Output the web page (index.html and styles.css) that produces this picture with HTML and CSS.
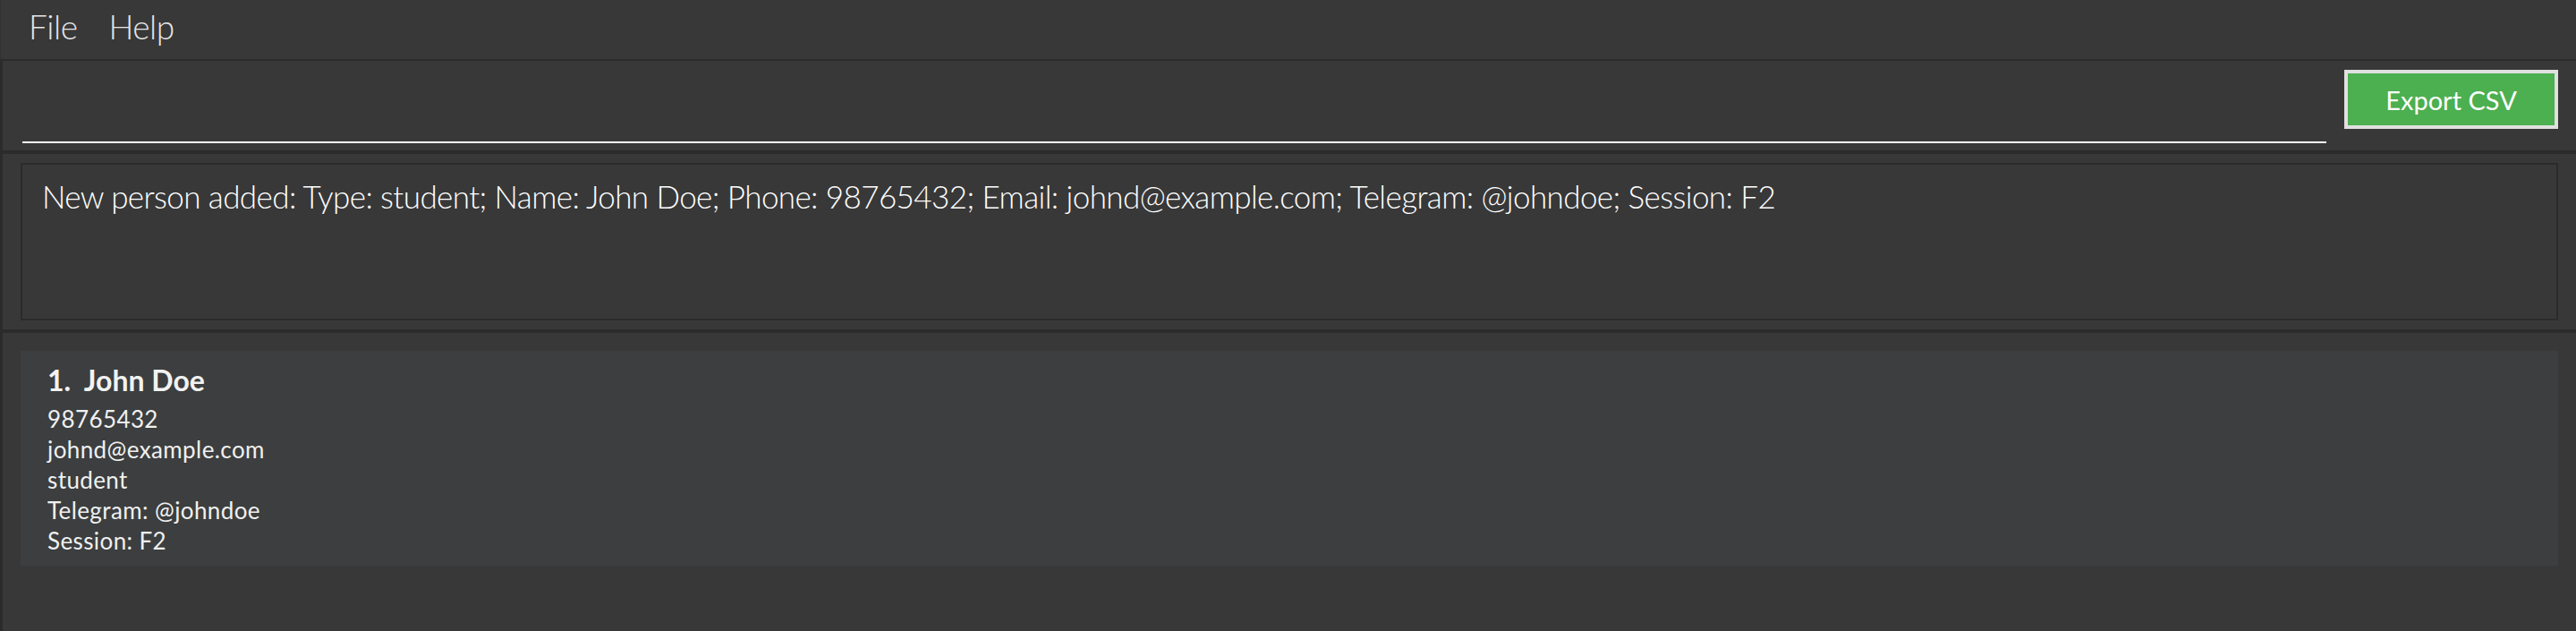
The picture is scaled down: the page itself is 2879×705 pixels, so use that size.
FILE: index.html
```html
<!DOCTYPE html>
<html lang="en">
<head>
<meta charset="utf-8">
<title>Address App</title>
<link rel="stylesheet" href="styles.css">
</head>
<body>
<div class="app">
  <nav class="menubar">
    <span class="menu-item">File</span>
    <span class="menu-item">Help</span>
  </nav>
  <section class="pane command-pane">
    <div class="command-field"></div>
    <button class="export-btn">Export CSV</button>
  </section>
  <section class="pane result-pane">
    <div class="result-box">New person added: Type: student; Name: John Doe; Phone: 98765432; Email: johnd@example.com; Telegram: @johndoe; Session: F2</div>
  </section>
  <section class="pane list-pane">
    <div class="card">
      <div class="card-name">1.&nbsp;&nbsp;John Doe</div>
      <div class="card-line">98765432</div>
      <div class="card-line">johnd@example.com</div>
      <div class="card-line">student</div>
      <div class="card-line">Telegram: @johndoe</div>
      <div class="card-line">Session: F2</div>
    </div>
  </section>
</div>
</body>
</html>
```

FILE: styles.css
```css
html, body {
  margin: 0;
  padding: 0;
  background: #383838;
}

.app {
  display: flex;
  flex-direction: column;
  height: 100vh;
  font-family: "Lato", "Liberation Sans", sans-serif;
  color: #ffffff;
}

.menubar {
  height: 66px;
  flex: none;
  box-sizing: border-box;
  background: #383838;
  display: flex;
  align-items: flex-start;
  gap: 35px;
  padding-left: 31px;
  border-left: 1px solid #333333;
}

.menu-item {
  font-weight: 300;
  font-size: 37px;
  line-height: 60px;
  letter-spacing: -0.5px;
  color: #e6e6e6;
}

.pane {
  background: #383838;
  border-left: 3px solid #2b2b2b;
  border-top: 2px solid #2b2b2b;
  box-sizing: border-box;
  flex: none;
}

.command-pane {
  height: 104px;
  display: flex;
  align-items: flex-start;
  padding: 10px 20px 0 22px;
  border-bottom: 2px solid #2b2b2b;
}

.command-field {
  flex: 1;
  height: 80px;
  border-bottom: 2px solid #ffffff;
}

.export-btn {
  margin-left: 20px;
  width: 239px;
  height: 66px;
  box-sizing: border-box;
  background: #4caf50;
  border: 4px solid #e0e0e0;
  color: #ffffff;
  font-family: "Lato", "Liberation Sans", sans-serif;
  font-size: 29px;
  font-weight: 400;
  padding: 0;
  cursor: pointer;
}

.result-pane {
  height: 200px;
  padding: 10px 20px 10px 20px;
  border-bottom: 2px solid #2b2b2b;
}

.result-box {
  height: 176px;
  box-sizing: border-box;
  border: 2px solid #2b2b2b;
  padding: 14px 22px 0 22px;
  font-weight: 300;
  font-size: 35px;
  line-height: 42px;
  letter-spacing: -0.6px;
  color: #ffffff;
  white-space: nowrap;
}

.list-pane {
  flex: 1;
  padding: 20px 20px 0 20px;
}

.card {
  background: #3c3e3f;
  height: 240px;
  box-sizing: border-box;
  padding: 10px 30px 11px 30px;
}

.card-name {
  font-size: 32px;
  font-weight: 700;
  line-height: 46px;
  color: #f2f2f2;
  margin-bottom: 3px;
}

.card-line {
  font-size: 26px;
  font-weight: 400;
  line-height: 34px;
  letter-spacing: 0.4px;
  color: #f0f0f0;
}
```
